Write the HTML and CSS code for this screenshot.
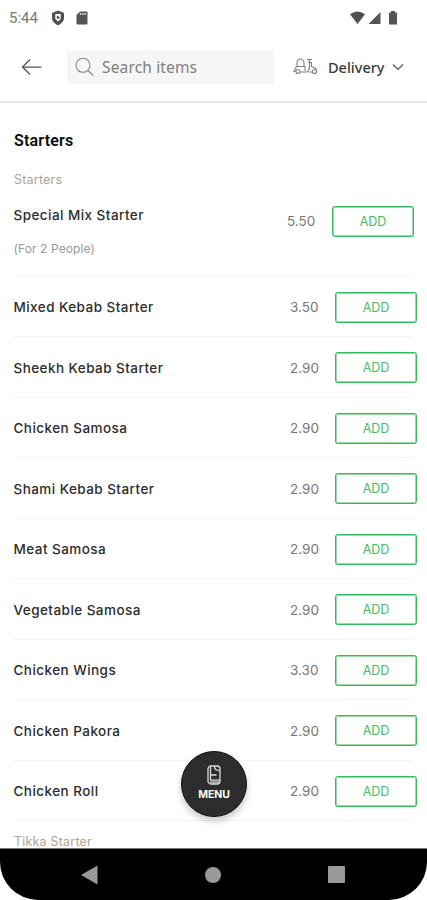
FILE: index.html
```
<!DOCTYPE html>
<html lang="en">
<head>
<meta charset="utf-8">
<title>Starters</title>
<link rel="stylesheet" href="styles.css">
</head>
<body>
<div class="phone">
  <div class="status">
    <span class="time">5:44</span>
    <svg class="shield" width="14" height="16" viewBox="0 0 14 16"><path d="M7 .5 13 3v4.700c0 3.400-2.600 6-6 7.500-3.400-1.500-6-4.100-6-7.500V3z" fill="#505050"/><path d="M4.300 4h5.400v5L7 11.500 4.300 9z" fill="#fff"/><path d="m5.800 5.300 3.400 2.100-3.400 2.100z" fill="#505050"/></svg>
    <svg class="sd" width="12" height="14" viewBox="0 0 12 14"><path d="M4 .5h6.500q1 0 1 1v11q0 1-1 1h-9q-1 0-1-1V4z" fill="#555"/><path d="M4.500 2v2M6.800 2v2M9 2v2" stroke="#ddd" stroke-width="1.300"/></svg>
    <svg class="signals" width="48" height="14" viewBox="0 0 48 14"><path d="M0 3.200Q7.500-2 15 3.200L7.500 13z" fill="#505050"/><path d="M30.500 1v12H18.500z" fill="#555"/><path d="M41 1.500V0h4v1.500h2V13.500h-8V1.500z" fill="#555"/></svg>
  </div>
  <header class="header">
    <svg class="back" width="22" height="18" viewBox="0 0 22 18" fill="none" stroke="#555" stroke-width="1.250"><path d="M20.500 9H1.500M9 1.500 1.500 9 9 16.500"/></svg>
    <div class="search">
      <svg width="19" height="20" viewBox="0 0 19 20" fill="none" stroke="#888" stroke-width="1.100"><circle cx="8" cy="8.300" r="7"/><path d="m13 13.500 5 5"/></svg>
      <span>Search items</span>
    </div>
    <svg class="scooter" width="25" height="17" viewBox="0 0 25 17" fill="none" stroke="#808080" stroke-width="1.100"><path d="M4 9V4.500Q4.500 1 7.500 1T11 4.500V9M3.500 8.500H12v4.500M3.500 8.500 1 13.500h2M7 14h7M14 1.500h5M15 4.500h3.500M16.500 1.500V9q0 3.500-2.500 5M18.500 4v4.500q4 1 5.500 4M16 14h4"/><circle cx="5" cy="13.500" r="2"/><circle cx="21.500" cy="13.500" r="2"/></svg>
    <span class="mode">Delivery</span>
    <svg class="chevron" width="12" height="8" viewBox="0 0 12 8" fill="none" stroke="#555" stroke-width="1.200"><path d="m1 1.500 5 5 5-5"/></svg>
  </header>
  <main class="list">
    <h1>Starters</h1>
    <h2>Starters</h2>
    <div class="row featured"><div class="name">Special Mix Starter<small>(For 2 People)</small></div><span class="price">5.50</span><button>ADD</button></div>
    <div class="row first"><div class="name">Mixed Kebab Starter</div><span class="price">3.50</span><button>ADD</button></div>
    <div class="row"><div class="name">Sheekh Kebab Starter</div><span class="price">2.90</span><button>ADD</button></div>
    <div class="row"><div class="name">Chicken Samosa</div><span class="price">2.90</span><button>ADD</button></div>
    <div class="row"><div class="name">Shami Kebab Starter</div><span class="price">2.90</span><button>ADD</button></div>
    <div class="row"><div class="name">Meat Samosa</div><span class="price">2.90</span><button>ADD</button></div>
    <div class="row"><div class="name">Vegetable Samosa</div><span class="price">2.90</span><button>ADD</button></div>
    <div class="row"><div class="name">Chicken Wings</div><span class="price">3.30</span><button>ADD</button></div>
    <div class="row"><div class="name">Chicken Pakora</div><span class="price">2.90</span><button>ADD</button></div>
    <div class="row"><div class="name">Chicken Roll</div><span class="price">2.90</span><button>ADD</button></div>
    <h2 class="next">Tikka Starter</h2>
  </main>
  <div class="menu">
    <svg width="14" height="20" viewBox="0 0 14 20" fill="none" stroke="#ddd" stroke-width="1.300"><rect x="1" y="1" width="12" height="18" rx="3"/><path d="M3.500 2v13M7.500 1.500q0 4 5 4M4 10h5.500M3 15.200h10M3 17.200h9"/></svg>
    <span>MENU</span>
  </div>
  <nav class="nav">
    <svg width="17" height="20" viewBox="0 0 17 20"><path d="M0 10 16.500.5v19z" fill="#999"/></svg>
    <svg width="16" height="16" viewBox="0 0 16 16"><circle cx="8" cy="8" r="8" fill="#999"/></svg>
    <svg width="17" height="17" viewBox="0 0 17 17"><rect width="17" height="17" rx="1" fill="#999"/></svg>
  </nav>
</div>
</body>
</html>
```

FILE: styles.css
```
* { box-sizing: border-box; }
body { margin: 0; background: #fff; font-family: Inter, "Liberation Sans", sans-serif; }
.phone { position: relative; width: 427px; height: 900px; overflow: hidden; display: flex; flex-direction: column; }
.status { height: 36px; flex: none; display: flex; align-items: center; padding: 0 29px 0 9px; }
.time { font: 15px/18px Roboto, sans-serif; color: #777; width: 42px; }
.sd { margin-left: 11px; }
.signals { margin-left: auto; }
.header { height: 66.500px; flex: none; display: flex; align-items: center; padding: 0 23px 3px 21px; border-bottom: 2px solid #e4e4e4; }
.search { margin-left: 24px; width: 207px; height: 34px; background: #f6f6f6; border-radius: 2px; display: flex; align-items: center; padding-left: 8px; gap: 8px; font: 15.500px/20px "Noto Sans", sans-serif; letter-spacing: .15px; color: #808080; }
.scooter { margin-left: 19px; }
.mode { margin-left: 10px; width: 64px; font: 500 14.500px/20px "Noto Sans", sans-serif; color: #3a3a3a; }
.list { flex: 1; min-height: 0; overflow: hidden; padding: 28.500px 14px 0; }
h1 { margin: 0; font: 600 16px/20px Roboto, sans-serif; color: #0c0c0c; letter-spacing: .2px; }
h2 { margin: 19px 0 -1px; font-size: 12.500px; line-height: 20px; font-weight: 400; letter-spacing: .2px; color: #ada48f; }
.row { height: 60.500px; display: flex; align-items: center; padding-top: 2px; border-bottom: 1px solid #f3f3f3; }
.name { flex: 1; margin-left: -.5px; font-size: 13.500px; line-height: 20px; font-weight: 500; letter-spacing: .45px; color: #2c2c2c; }
.name small { display: block; margin-top: 14px; font-size: 12px; font-weight: 400; letter-spacing: .1px; color: #999; }
.price { width: 45px; font-size: 13.500px; color: #777; }
button { flex: none; width: 82px; height: 31px; margin-right: -4px; padding: 1px 0 0; border: 1px solid #36b85c; box-shadow: inset 0 0 0 .5px #36b85c; border-radius: 2.500px; background: #fff; font: 400 12.500px/20px Inter, sans-serif; color: #45bd68; }
.featured { height: 87px; align-items: flex-start; padding-top: 16px; }
.featured .price { margin-top: 8px; }
.featured button { margin-top: 1px; margin-right: -1px; }
.first { height: 61px; }
.next { margin-top: 11px; }
.menu { position: absolute; left: 181px; top: 751px; width: 66px; height: 66px; border-radius: 50%; background: #2d2d2d; border: 1px solid #111; box-shadow: 0 4px 7px rgba(0,0,0,.22); display: flex; flex-direction: column; align-items: center; padding-top: 13px; }
.menu span { margin-top: 3px; font-size: 10.500px; line-height: 14px; font-weight: 700; letter-spacing: -.1px; color: #fff; }
.nav { height: 52px; flex: none; background: #000; border-top: 1px solid #777; border-radius: 0 0 38px 38px; display: flex; align-items: center; justify-content: space-between; padding: 0 82px 0 81px; }
```
